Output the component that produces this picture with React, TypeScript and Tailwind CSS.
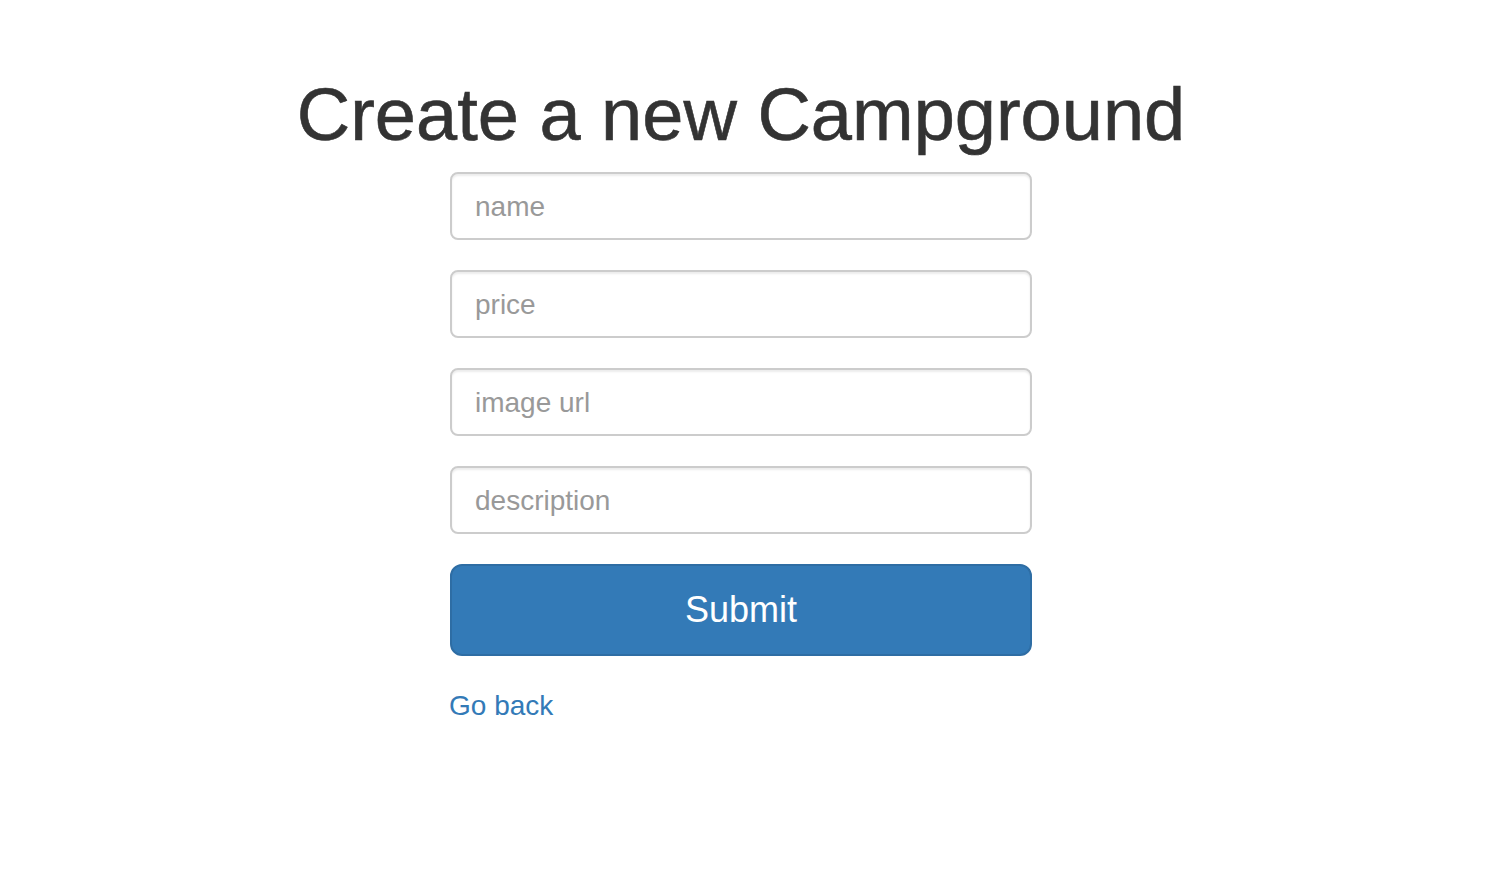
export default function App() {
  const fields = ["name", "price", "image url", "description"];
  return (
    <div
      className="min-h-[872px] w-full bg-white pr-[16px]"
      style={{ fontFamily: '"Liberation Sans", Arial, Helvetica, sans-serif' }}
    >
      <div className="flex flex-col items-center">
        <h1 className="mt-[75px] mb-[17px] text-[74px] leading-[80px] font-normal text-[#333333] whitespace-nowrap [-webkit-text-stroke:0.6px_#333333]">
          Create a new Campground
        </h1>
        <form className="w-[582px] flex flex-col" onSubmit={(e) => e.preventDefault()}>
          {fields.map((f) => (
            <input
              key={f}
              type="text"
              placeholder={f}
              className="mb-[30px] h-[68px] w-full rounded-[8px] border-2 border-[#cccccc] bg-white pl-[23px] pr-[24px] pt-[2px] text-[28px] text-[#555555] placeholder:text-[#999999] shadow-[inset_0_2px_2px_rgba(0,0,0,0.075)] outline-none"
            />
          ))}
          <button
            type="submit"
            className="h-[92px] w-full rounded-[12px] border-2 border-[#2e6da4] bg-[#337ab7] text-[36px] text-white"
          >
            Submit
          </button>
          <div className="mt-[30px] -ml-[1px]">
            <a href="#" className="text-[28px] leading-[40px] text-[#337ab7]">
              Go back
            </a>
          </div>
        </form>
      </div>
    </div>
  );
}
